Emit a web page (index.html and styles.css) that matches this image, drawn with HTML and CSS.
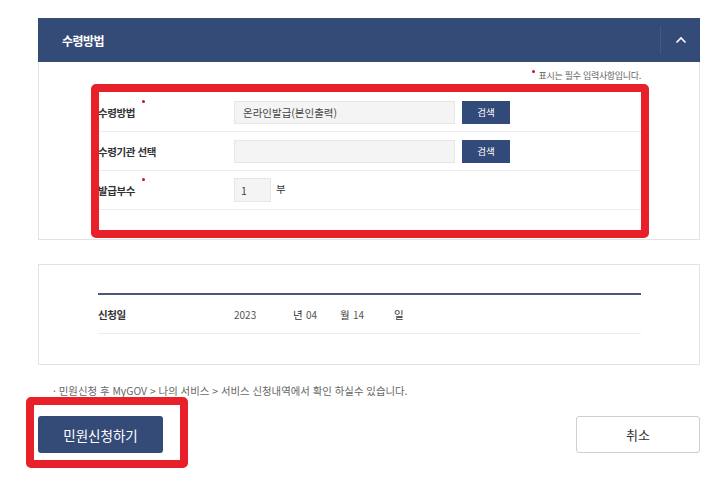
FILE: index.html
```html
<!DOCTYPE html>
<html lang="ko">
<head>
    <meta charset="UTF-8">
    <meta name="viewport" content="width=device-width, initial-scale=1.0">
    <title>수령방법</title>
    <link rel="stylesheet" href="styles.css">
</head>
<body>
    <div class="page">
        <section class="panel">
            <div class="panel-head">
                <h2>수령방법</h2>
                <button type="button" class="toggle" aria-label="접기">
                    <svg width="12" height="8" viewBox="0 0 12 8"><polyline points="1.5,6.5 6,2 10.5,6.5" fill="none" stroke="#fff" stroke-width="1.6"/></svg>
                </button>
            </div>
            <div class="panel-body">
                <p class="req-note"><span class="dot"></span>표시는 필수 입력사항입니다.</p>
                <div class="form-table">
                    <div class="form-row">
                        <div class="label req">수령방법</div>
                        <div class="field">
                            <input type="text" class="text-input" value="온라인발급(본인출력)" readonly>
                            <button type="button" class="btn-search">검색</button>
                        </div>
                    </div>
                    <div class="form-row">
                        <div class="label">수령기관 선택</div>
                        <div class="field">
                            <input type="text" class="text-input" readonly>
                            <button type="button" class="btn-search">검색</button>
                        </div>
                    </div>
                    <div class="form-row">
                        <div class="label req">발급부수</div>
                        <div class="field">
                            <input type="text" class="num-input" value="1">
                            <span class="unit">부</span>
                        </div>
                    </div>
                    <div class="mark mark-form"></div>
                </div>
            </div>
        </section>

        <section class="panel panel-date">
            <div class="date-table">
                <div class="date-row">
                    <div class="label">신청일</div>
                    <div class="date-val">
                        <span class="yy">2023</span>
                        <span class="suffix">년</span>
                        <span class="mm">04</span>
                        <span class="suffix">월</span>
                        <span class="dd">14</span>
                        <span class="suffix">일</span>
                    </div>
                </div>
            </div>
        </section>

        <p class="info">· 민원신청 후 MyGOV &gt; 나의 서비스 &gt; 서비스 신청내역에서 확인 하실수 있습니다.</p>

        <div class="actions">
            <div class="submit-wrap">
                <button type="button" class="btn-submit">민원신청하기</button>
                <div class="mark mark-submit"></div>
            </div>
            <button type="button" class="btn-cancel">취소</button>
        </div>
    </div>
</body>
</html>
```

FILE: styles.css
```css
body {
    margin: 0;
    background: #fff;
    font-family: "Noto Sans CJK KR", "Noto Sans", sans-serif;
    color: #333;
}

.page {
    width: 662px;
    padding: 18px 0 34px 38px;
}

.panel {
    border: 1px solid #e3e3e3;
    border-top: none;
}

.panel-head {
    height: 44px;
    margin: 0 -1px;
    background-color: #354b77;
    display: flex;
    align-items: center;
    justify-content: space-between;
}

.panel-head h2 {
    margin: 0 0 0 24px;
    font-size: 12px;
    font-weight: bold;
    color: #fff;
    letter-spacing: -0.5px;
}

.toggle {
    width: 40px;
    height: 28px;
    padding: 0;
    background: none;
    border: none;
    border-left: 1px solid #44598a;
    display: flex;
    align-items: center;
    justify-content: center;
}

.panel-body {
    padding: 7px 58px 29px 59px;
}

.req-note {
    margin: 0 0 10px;
    text-align: right;
    font-size: 9px;
    line-height: 14px;
    color: #666;
    letter-spacing: -0.3px;
}

.dot {
    display: inline-block;
    width: 3px;
    height: 3px;
    border-radius: 50%;
    background: #c0142c;
    vertical-align: top;
    margin: 1px 4px 0 0;
}

.form-table {
    position: relative;
}

.form-row {
    display: flex;
    align-items: center;
    height: 38px;
    border-bottom: 1px solid #ededed;
}

.label {
    width: 136px;
    flex-shrink: 0;
    font-size: 10.5px;
    font-weight: bold;
    color: #333;
    letter-spacing: -0.4px;
}

.label.req::after {
    content: "";
    display: inline-block;
    width: 3px;
    height: 3px;
    border-radius: 50%;
    background: #c0142c;
    vertical-align: top;
    margin: -5px 0 0 7px;
}

.field {
    display: flex;
    align-items: center;
    gap: 7px;
}

.text-input,
.num-input {
    box-sizing: border-box;
    height: 23px;
    padding: 0 8px;
    border: 1px solid #e6e6e6;
    background: #f4f4f4;
    font-family: inherit;
    font-size: 10.5px;
    color: #444;
    outline: none;
}

.text-input {
    width: 221px;
}

.num-input {
    width: 37px;
    height: 24px;
    padding: 0 6px;
}

.unit {
    font-size: 10.5px;
    color: #333;
    margin: -4px 0 0 -2px;
}

.btn-search {
    width: 48px;
    height: 23px;
    padding: 0;
    border: none;
    background-color: #314a79;
    color: #fff;
    font-family: inherit;
    font-size: 9.5px;
}

.mark {
    position: absolute;
    border: 8px solid #e8202a;
    border-radius: 5px;
    pointer-events: none;
}

.mark-form {
    left: -7px;
    top: -9px;
    right: -8px;
    bottom: -28px;
}

.panel-date {
    margin-top: 24px;
    border-top: 1px solid #e3e3e3;
    padding: 28px 58px 30px 59px;
}

.date-table {
    border-top: 2px solid #4b5872;
}

.date-row {
    display: flex;
    align-items: center;
    height: 38px;
    border-bottom: 1px solid #ededed;
}

.date-val {
    display: flex;
    align-items: center;
    font-size: 10px;
    color: #555;
}

.date-val span {
    display: inline-block;
}

.yy {
    width: 59px;
}

.mm {
    width: 34px;
}

.dd {
    width: 41px;
}

.suffix {
    width: 13px;
    font-size: 10.5px;
    color: #333;
}

.info {
    margin: 18px 0 0 15px;
    font-size: 10.4px;
    color: #666;
}

.actions {
    display: flex;
    justify-content: space-between;
    margin-top: 18px;
}

.submit-wrap {
    position: relative;
}

.btn-submit {
    width: 125px;
    height: 37px;
    border: none;
    border-radius: 3px;
    background-color: #344b78;
    color: #fff;
    font-family: inherit;
    font-size: 13.5px;
}

.mark-submit {
    left: -12px;
    top: -19px;
    width: 146px;
    height: 55px;
}

.btn-cancel {
    width: 124px;
    height: 37px;
    border: 1px solid #cfcfcf;
    border-radius: 3px;
    background: #fff;
    color: #333;
    font-family: inherit;
    font-size: 13px;
}
```
